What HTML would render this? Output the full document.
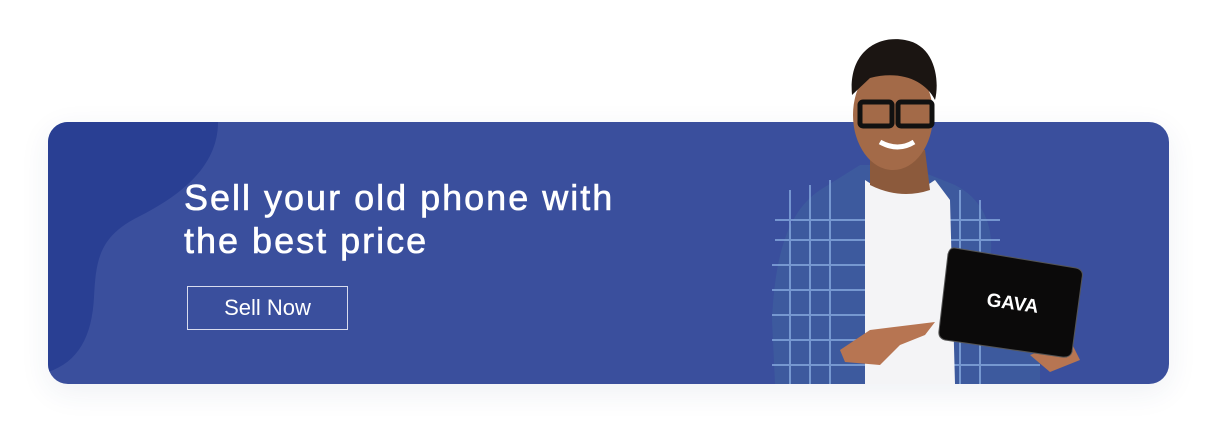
<!DOCTYPE html>
<html><head><style>
body{margin:0;width:1217px;height:442px;background:#fff;position:relative;overflow:hidden;font-family:"Liberation Sans",sans-serif}
.b{position:absolute;left:48px;top:122px;width:1121px;height:262px;border-radius:20px;background:#3a4f9d;overflow:hidden;box-shadow:0 8px 30px rgba(40,60,120,.08)}
h1{position:absolute;left:184px;top:176px;margin:0;color:#fff;font-size:36px;font-weight:normal;line-height:43px;letter-spacing:2px;-webkit-text-stroke:.6px #fff;white-space:nowrap}
.btn{position:absolute;left:187px;top:286px;width:159px;height:42px;border:1.5px solid #d8dcee;color:#fff;font-size:22px;line-height:42px;text-align:center}
</style></head><body>
<div class="b">
<svg width="1121" height="262" style="position:absolute;left:0;top:0">
<path d="M0 0 H170 C170 40 140 70 90 95 C50 115 48 140 46 175 C44 215 30 240 0 250 Z" fill="#293f93"/>
</svg>
</div>
<h1>Sell your old phone with<br>the best price</h1>
<div class="btn">Sell Now</div>
<svg width="1217" height="442" style="position:absolute;left:0;top:0">
<path d="M775 384 L772 320 C775 250 790 210 820 190 L860 165 L905 165 L955 185 C985 200 995 230 990 260 L1000 300 L1040 355 L1040 384 Z" fill="#3d5a9e"/>
<g stroke="#8fb3e6" stroke-width="2" opacity=".7">
<path d="M775 220H1000M775 240H1000M772 265H1000M772 290H1000M772 315H1000M772 340H1000M772 365H1040"/>
<path d="M790 190V384M810 185V384M830 180V384M960 190V384M980 200V384"/>
</g>
<path d="M865 180 Q900 205 935 180 L950 200 L955 384 H865 Z" fill="#f4f4f6"/>
<path d="M870 150 H925 L930 190 Q900 200 870 185 Z" fill="#8c5a3c"/>
<ellipse cx="893" cy="115" rx="40" ry="55" fill="#a36a48"/>
<path d="M852 95 C848 50 880 35 905 40 C935 45 940 80 935 100 C925 80 900 70 870 78 Z" fill="#1b1512"/>
<rect x="860" y="102" width="32" height="24" rx="3" fill="none" stroke="#111" stroke-width="5"/>
<rect x="898" y="102" width="34" height="24" rx="3" fill="none" stroke="#111" stroke-width="5"/>
<path d="M880 142 Q898 152 914 142" stroke="#fff" stroke-width="5" fill="none"/>
<path d="M840 350 L870 330 L935 322 L925 335 L900 345 L880 365 L845 362 Z" fill="#b77552"/>
<path d="M1030 355 L1070 340 L1080 360 L1050 372 Z" fill="#b77552"/>
<path d="M955 248 L1076 268 Q1084 270 1082 278 L1072 352 Q1070 358 1062 357 L945 340 Q938 338 939 331 L948 254 Q950 247 955 248 Z" fill="#0b0a0a" stroke="#555" stroke-width="1"/>
<text x="987" y="309" fill="#fff" font-size="19" font-weight="bold" font-family="Liberation Sans,sans-serif" transform="rotate(8 1010 300)">GAVA</text>
</svg>
</body></html>
